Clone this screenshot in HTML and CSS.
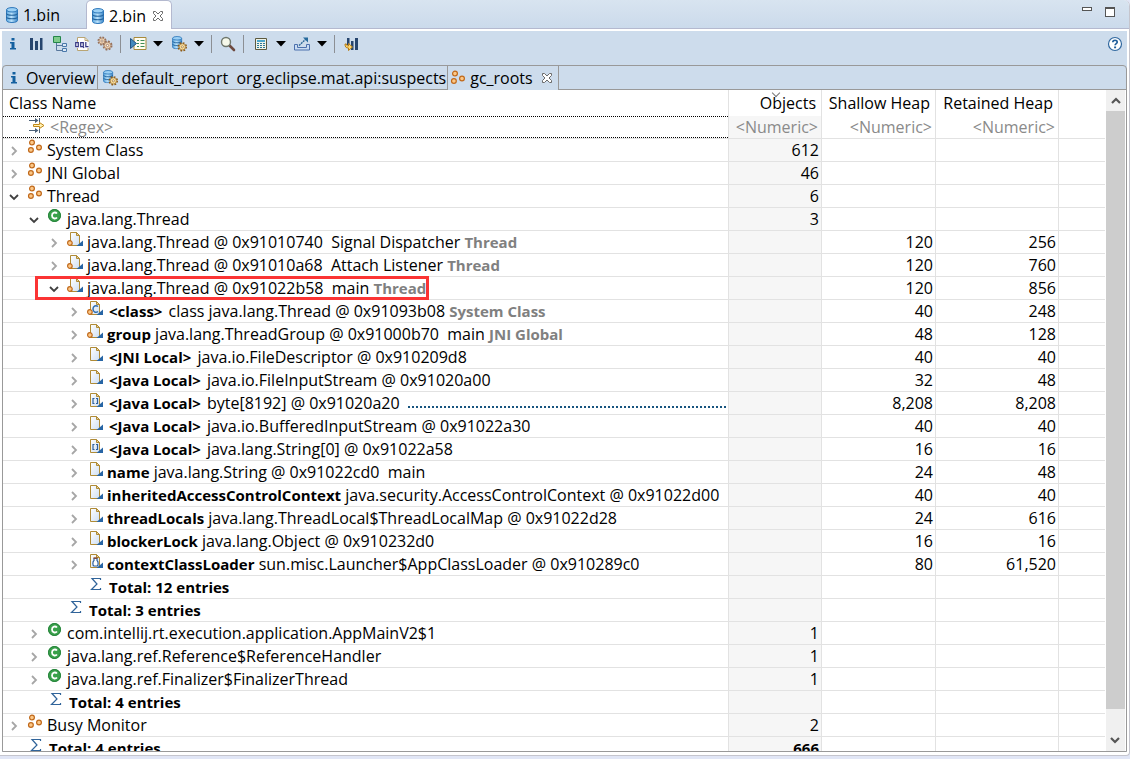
FILE: index.html
```html
<!DOCTYPE html>
<html lang="en">
<head>
<meta charset="utf-8">
<title>Memory Analyzer</title>
<link rel="stylesheet" href="styles.css">
</head>
<body>
<svg class="defs" aria-hidden="true">
  <defs>
    <linearGradient id="page" x1="0" y1="0" x2="1" y2="1"><stop offset="0" stop-color="#ffffff"/><stop offset="1" stop-color="#cfdff2"/></linearGradient>
    <linearGradient id="disk" x1="0" y1="0" x2="1" y2="0"><stop offset="0" stop-color="#5aa6de"/><stop offset=".45" stop-color="#b9e0fa"/><stop offset="1" stop-color="#3a86c8"/></linearGradient>
  </defs>
  <symbol id="i-db" viewBox="0 0 16 16">
    <path d="M2.5 3v10.500c0 1.100 2.200 2 5.500 2s5.500-.9 5.500-2V3z" fill="url(#disk)" stroke="#2f78bb"/>
    <path d="M2.500 6.200c0 1.300 2.200 2 5.500 2s5.500-.7 5.500-2M2.500 9.700c0 1.300 2.200 2 5.500 2s5.500-.7 5.500-2" fill="none" stroke="#24659f" stroke-width="1.100"/>
    <ellipse cx="8" cy="2.800" rx="5.500" ry="2.200" fill="#9bd0f5" stroke="#2b76b9"/>
  </symbol>
  <symbol id="i-gear" viewBox="0 0 16 16">
    <circle cx="8" cy="8" r="6" fill="none" stroke="#8d5a14" stroke-width="2.600" stroke-dasharray="2.700 2.010"/>
    <circle cx="8" cy="8" r="4.800" fill="#fbe2a2" stroke="#a5732c" stroke-width="1.100"/>
    <circle cx="8" cy="8" r="1.700" fill="#fff" stroke="#96631c"/>
  </symbol>
  <symbol id="i-gear2" viewBox="0 0 16 16">
    <circle cx="8" cy="8" r="6" fill="none" stroke="#97705a" stroke-width="2.600" stroke-dasharray="2.700 2.010"/>
    <circle cx="8" cy="8" r="4.800" fill="#efd3b4" stroke="#a37a5c" stroke-width="1.100"/>
    <circle cx="8" cy="8" r="1.700" fill="#fff" stroke="#8f674d"/>
  </symbol>
  <symbol id="i-dbgear" viewBox="0 0 18 17">
    <use href="#i-db" x="0" y="0" width="14" height="14"/>
    <use href="#i-gear" x="7" y="6" width="11" height="11"/>
  </symbol>
  <symbol id="i-info" viewBox="0 0 16 16">
    <path d="M6.500 2h3v2.500h-3zM5 6h4.500v6H11v1.500H5V12h1.500V7.500H5z" fill="#14609f"/>
  </symbol>
  <symbol id="i-bars" viewBox="0 0 16 16">
    <path d="M2 2h3v12H2zM7 5h3v9H7zM12 2h2.500v12H12z" fill="#26456e"/>
  </symbol>
  <symbol id="i-tree" viewBox="0 0 16 16">
    <path d="M5.500 7v7.500H11M5.500 9.500H11" fill="none" stroke="#58779c"/>
    <path d="M2.500 .5h7v6h-7z" fill="#7fcb8b" stroke="#24864a"/>
    <path d="M11.500 7.500h4v3h-4zM11.500 12.500h4v3h-4z" fill="#dbe8f6" stroke="#4a78aa"/>
  </symbol>
  <symbol id="i-oql" viewBox="0 0 16 16">
    <path d="M3.500 1.500h7.500l3 3v10H3.500z" fill="#fff" stroke="#b9a574"/>
    <path d="M11 1.500v3h3" fill="none" stroke="#b9a574"/>
    <path d="M1 6h14v6H1z" fill="#f5f6fb"/>
    <path d="M1.700 6.700h2.600v4H1.700zM6.700 6.700h2.600v4H6.700zM8.500 10l1.500 2M11.800 6v4.700h2.700" fill="none" stroke="#363783" stroke-width="1.200"/>
  </symbol>
  <symbol id="i-gears" viewBox="0 0 16 16">
    <use href="#i-gear2" x="0" y="0" width="10" height="10"/>
    <use href="#i-gear2" x="5" y="4" width="11" height="11"/>
  </symbol>
  <symbol id="i-run" viewBox="0 0 17 16">
    <path d="M4.500 1.500h12v12h-12z" fill="#fffdf0" stroke="#a88a3c"/>
    <path d="M7.500 4.500h2m1.500 0h4M7.500 7.500h2m1.500 0h4M7.500 10.500h2m1.500 0h4" stroke="#3e8c57" stroke-width="1.200"/>
    <path d="M1 2.500v10l6-5z" fill="#4289bd" stroke="#215486"/>
  </symbol>
  <symbol id="i-search" viewBox="0 0 16 16">
    <path d="M9.500 9.500l4.500 4.500" stroke="#6e4a40" stroke-width="2.600" stroke-linecap="round"/>
    <circle cx="6" cy="6" r="4.500" fill="#f6f9ea" stroke="#6f776c" stroke-width="1.400"/>
  </symbol>
  <symbol id="i-calc" viewBox="0 0 16 16">
    <path d="M2.500 2.500h11v11h-11z" fill="#eef3e9" stroke="#5d5a3f"/>
    <path d="M4 4h8v2H4z" fill="#4ba6cb"/>
    <path d="M4 7.500h8M4 9.500h8M4 11.500h8" stroke="#2d7896" stroke-dasharray="2 1"/>
  </symbol>
  <symbol id="i-export" viewBox="0 0 18 16">
    <path d="M1.500 8.500h3v3h9v-3h3v5.500h-15z" fill="#c9dcf2" stroke="#4c70ad"/>
    <path d="M6 9.500l7-6.500" stroke="#2c6798" stroke-width="1.400" stroke-dasharray="2 .7"/>
    <path d="M10 1.500h5v5z" fill="#276a9c"/>
  </symbol>
  <symbol id="i-compare" viewBox="0 0 16 16">
    <path d="M4 2h2.500v7H4zM8 5h2.500v9H8zM12 2h3v12h-3z" fill="#26456e"/>
    <path d="M2 8c0 3 1 4 3.500 4v2.500L9.500 11 5.500 7.500V10C4 10 3.500 9.500 3.500 8z" fill="#ffd972" stroke="#b67d16"/>
  </symbol>
  <symbol id="i-help" viewBox="0 0 16 16">
    <circle cx="8" cy="8" r="6.500" fill="#fff" stroke="#31689f" stroke-width="1.200"/>
    <path d="M5.800 6.300C5.800 3.500 10.300 3.700 10.200 6.200 10.100 7.500 8.100 7.700 8.100 9.300" fill="none" stroke="#1f5d99" stroke-width="1.700"/>
    <path d="M7.100 10.500h2v1.700h-2z" fill="#1f5d99"/>
  </symbol>
  <symbol id="i-close" viewBox="0 0 12 12">
    <path d="M1.500 1.500h2L6 4l2.500-2.500h2v2L8 6l2.500 2.500v2h-2L6 8l-2.500 2.500h-2v-2L4 6 1.500 3.500z" fill="#fff" stroke="#6b6b6b"/>
  </symbol>
  <symbol id="i-roots" viewBox="0 0 16 16">
    <g fill="#fcc888" stroke="#c0691b" stroke-width="1.200"><circle cx="5" cy="3.500" r="2.400"/><circle cx="3.900" cy="11" r="2.400"/><circle cx="12" cy="8.500" r="2.400"/></g>
  </symbol>
  <symbol id="i-regex" viewBox="0 0 16 16">
    <path d="M0 3.500h8M0 13.500h8M10.500 1v4.500M10.500 11.500V16" fill="none" stroke="#4b6078"/>
    <path d="M6 1l3.500 2.500L6 6zM6 11l3.500 2.500L6 16z" fill="#4b6078"/>
    <path d="M4.500 7.500h6v-2L15 8.500l-4.500 3v-2h-6z" fill="#fff0b4" stroke="#c08716"/>
  </symbol>
  <symbol id="i-class" viewBox="0 0 16 16">
    <circle cx="7.500" cy="7.500" r="6.500" fill="#39a04a"/><circle cx="7.500" cy="7.500" r="6" fill="none" stroke="#24813a"/>
    <path d="M10 5.500C8.500 3.800 5 4.200 5 7.500s3.500 3.700 5 2" fill="none" stroke="#fff" stroke-width="1.800"/>
  </symbol>
  <symbol id="i-obj" viewBox="0 0 16 16">
    <path d="M3.500 1.500h6l3 3v10h-9z" fill="url(#page)" stroke="#b08b36"/>
    <path d="M9.500 1.500v3h3z" fill="#e9d49a" stroke="#b08b36"/>
    <path d="M16 9.500V15H9.500z" fill="#2765a5"/>
  </symbol>
  <symbol id="i-objroot" viewBox="0 0 16 16">
    <use href="#i-obj" width="16" height="16"/>
    <circle cx="2.900" cy="12" r="2.300" fill="#fcc888" stroke="#c0691b" stroke-width="1.200"/>
  </symbol>
  <symbol id="i-objclass" viewBox="0 0 16 16">
    <use href="#i-objroot" width="16" height="16"/>
    <path d="M11 6.500C9 5 6 5.800 6 9s3 4.200 5 2.500" fill="none" stroke="#2f6db0" stroke-width="1.500"/>
  </symbol>
  <symbol id="i-array" viewBox="0 0 16 16">
    <use href="#i-obj" width="16" height="16"/>
    <path d="M7.500 6.500H6v5h1.500M9 6.500h1.500v5H9" fill="none" stroke="#2b5f9e" stroke-width="1.200"/>
  </symbol>
  <symbol id="i-loader" viewBox="0 0 16 16">
    <use href="#i-obj" width="16" height="16"/>
    <path d="M7 5.500h3v2c1.500 1 1.500 5 0 5.500H7c-1.500-.5-1.500-4.500 0-5.500z" fill="#fff" stroke="#2b5f9e" stroke-width="1.200"/>
    <path d="M6.500 5h4" stroke="#994a22" stroke-width="1.400"/>
  </symbol>
  <symbol id="i-sum" viewBox="0 0 16 16">
    <path d="M13.500 4V2.500H5L10 8l-5.500 5.500h9V12" fill="none" stroke="#30649a" stroke-width="1.200"/>
  </symbol>
  <symbol id="i-right" viewBox="0 0 14 14"><path d="M5 4l4 4-4 4" fill="none" stroke="#a6a6a6" stroke-width="1.800"/></symbol>
  <symbol id="i-down" viewBox="0 0 14 14"><path d="M3 6l4 4 4-4" fill="none" stroke="#404040" stroke-width="1.800"/></symbol>
  <symbol id="i-up" viewBox="0 0 14 14"><path d="M3 9l4-4 4 4" fill="none" stroke="#555" stroke-width="2.200"/></symbol>
  <symbol id="i-menu" viewBox="0 0 10 6"><path d="M0 0h10L5 5.500z" fill="#000"/></symbol>
</svg>

<main class="editor">
  <header class="filetabs">
    <button class="filetab"><svg class="icon"><use href="#i-db"/></svg>1.bin</button>
    <button class="filetab active"><svg class="icon"><use href="#i-db"/></svg>2.bin<svg class="close"><use href="#i-close"/></svg></button>
    <div class="window">
      <button class="min" aria-label="Minimize"></button>
      <button class="max" aria-label="Maximize"></button>
    </div>
  </header>

  <section class="pane">
    <div class="toolbar">
      <button aria-label="Overview"><svg class="icon"><use href="#i-info"/></svg></button>
      <button aria-label="Histogram"><svg class="icon"><use href="#i-bars"/></svg></button>
      <button aria-label="Dominator tree"><svg class="icon"><use href="#i-tree"/></svg></button>
      <button aria-label="Query language"><svg class="icon"><use href="#i-oql"/></svg></button>
      <button aria-label="Thread overview"><svg class="icon"><use href="#i-gears"/></svg></button>
      <span class="sep"></span>
      <button class="drop" aria-label="Run report"><svg class="icon wide"><use href="#i-run"/></svg><svg class="menu"><use href="#i-menu"/></svg></button>
      <button class="drop" aria-label="Query browser"><svg class="icon wide"><use href="#i-dbgear"/></svg><svg class="menu"><use href="#i-menu"/></svg></button>
      <span class="sep"></span>
      <button aria-label="Find"><svg class="icon"><use href="#i-search"/></svg></button>
      <span class="sep"></span>
      <button class="drop" aria-label="Calculate retained size"><svg class="icon wide"><use href="#i-calc"/></svg><svg class="menu"><use href="#i-menu"/></svg></button>
      <button class="drop" aria-label="Export"><svg class="icon wide"><use href="#i-export"/></svg><svg class="menu"><use href="#i-menu"/></svg></button>
      <span class="sep"></span>
      <button aria-label="Compare"><svg class="icon"><use href="#i-compare"/></svg></button>
      <button class="help" aria-label="Help"><svg class="icon"><use href="#i-help"/></svg></button>
    </div>

    <div class="view">
      <nav class="viewtabs">
        <button class="viewtab"><svg class="icon"><use href="#i-info"/></svg>Overview</button>
        <button class="viewtab report"><svg class="icon wide"><use href="#i-dbgear"/></svg>default_report&nbsp; org.eclipse.mat.api:suspects</button>
        <button class="viewtab active"><svg class="icon"><use href="#i-roots"/></svg>gc_roots<svg class="close"><use href="#i-close"/></svg></button>
      </nav>

      <div class="content">
        <div class="scroller">
          <table>
            <colgroup><col><col class="c-objects"><col class="c-shallow"><col class="c-retained"><col class="c-rest"></colgroup>
            <thead>
              <tr><th>Class Name</th><th class="sorted">Objects</th><th>Shallow Heap</th><th>Retained Heap</th><th></th></tr>
            </thead>
            <tbody>
              <tr class="filter">
                <td><label class="node"><i class="twisty"></i><svg class="icon"><use href="#i-regex"/></svg><input aria-label="Class name filter" placeholder="&lt;Regex&gt;"></label></td>
                <td><input aria-label="Objects filter" placeholder="&lt;Numeric&gt;"></td>
                <td><input aria-label="Shallow heap filter" placeholder="&lt;Numeric&gt;"></td>
                <td><input aria-label="Retained heap filter" placeholder="&lt;Numeric&gt;"></td><td></td>
              </tr>
              <tr><td><div class="node"><svg class="twisty"><use href="#i-right"/></svg><svg class="icon"><use href="#i-roots"/></svg><span>System Class</span></div></td><td>612</td><td></td><td></td><td></td></tr>
              <tr><td><div class="node"><svg class="twisty"><use href="#i-right"/></svg><svg class="icon"><use href="#i-roots"/></svg><span>JNI Global</span></div></td><td>46</td><td></td><td></td><td></td></tr>
              <tr><td><div class="node"><svg class="twisty"><use href="#i-down"/></svg><svg class="icon"><use href="#i-roots"/></svg><span>Thread</span></div></td><td>6</td><td></td><td></td><td></td></tr>
              <tr><td><div class="node l1"><svg class="twisty"><use href="#i-down"/></svg><svg class="icon"><use href="#i-class"/></svg><span>java.lang.Thread</span></div></td><td>3</td><td></td><td></td><td></td></tr>
              <tr><td><div class="node l2"><svg class="twisty"><use href="#i-right"/></svg><svg class="icon"><use href="#i-objroot"/></svg><span>java.lang.Thread @ 0x91010740&nbsp; Signal Dispatcher <b class="root">Thread</b></span></div></td><td></td><td>120</td><td>256</td><td></td></tr>
              <tr><td><div class="node l2"><svg class="twisty"><use href="#i-right"/></svg><svg class="icon"><use href="#i-objroot"/></svg><span>java.lang.Thread @ 0x91010a68&nbsp; Attach Listener <b class="root">Thread</b></span></div></td><td></td><td>120</td><td>760</td><td></td></tr>
              <tr><td><div class="node l2 marked"><svg class="twisty"><use href="#i-down"/></svg><svg class="icon"><use href="#i-objroot"/></svg><span>java.lang.Thread @ 0x91022b58&nbsp; main <b class="root">Thread</b></span></div></td><td></td><td>120</td><td>856</td><td></td></tr>
              <tr><td><div class="node l3"><svg class="twisty"><use href="#i-right"/></svg><svg class="icon"><use href="#i-objclass"/></svg><span><b class="ref">&lt;class&gt;</b> class java.lang.Thread @ 0x91093b08 <b class="root">System Class</b></span></div></td><td></td><td>40</td><td>248</td><td></td></tr>
              <tr><td><div class="node l3"><svg class="twisty"><use href="#i-right"/></svg><svg class="icon"><use href="#i-objroot"/></svg><span><b>group</b> java.lang.ThreadGroup @ 0x91000b70&nbsp; main <b class="root">JNI Global</b></span></div></td><td></td><td>48</td><td>128</td><td></td></tr>
              <tr><td><div class="node l3"><svg class="twisty"><use href="#i-right"/></svg><svg class="icon"><use href="#i-obj"/></svg><span><b class="ref">&lt;JNI Local&gt;</b> java.io.FileDescriptor @ 0x910209d8</span></div></td><td></td><td>40</td><td>40</td><td></td></tr>
              <tr><td><div class="node l3"><svg class="twisty"><use href="#i-right"/></svg><svg class="icon"><use href="#i-obj"/></svg><span><b class="ref">&lt;Java Local&gt;</b> java.io.FileInputStream @ 0x91020a00</span></div></td><td></td><td>32</td><td>48</td><td></td></tr>
              <tr><td><div class="node l3"><svg class="twisty"><use href="#i-right"/></svg><svg class="icon"><use href="#i-array"/></svg><span><b class="ref">&lt;Java Local&gt;</b> byte[8192] @ 0x91020a20</span><i class="dots"></i></div></td><td></td><td>8,208</td><td>8,208</td><td></td></tr>
              <tr><td><div class="node l3"><svg class="twisty"><use href="#i-right"/></svg><svg class="icon"><use href="#i-obj"/></svg><span><b class="ref">&lt;Java Local&gt;</b> java.io.BufferedInputStream @ 0x91022a30</span></div></td><td></td><td>40</td><td>40</td><td></td></tr>
              <tr><td><div class="node l3"><svg class="twisty"><use href="#i-right"/></svg><svg class="icon"><use href="#i-array"/></svg><span><b class="ref">&lt;Java Local&gt;</b> java.lang.String[0] @ 0x91022a58</span></div></td><td></td><td>16</td><td>16</td><td></td></tr>
              <tr><td><div class="node l3"><svg class="twisty"><use href="#i-right"/></svg><svg class="icon"><use href="#i-obj"/></svg><span><b>name</b> java.lang.String @ 0x91022cd0&nbsp; main</span></div></td><td></td><td>24</td><td>48</td><td></td></tr>
              <tr><td><div class="node l3"><svg class="twisty"><use href="#i-right"/></svg><svg class="icon"><use href="#i-obj"/></svg><span><b>inheritedAccessControlContext</b> java.security.AccessControlContext @ 0x91022d00</span></div></td><td></td><td>40</td><td>40</td><td></td></tr>
              <tr><td><div class="node l3"><svg class="twisty"><use href="#i-right"/></svg><svg class="icon"><use href="#i-obj"/></svg><span><b>threadLocals</b> java.lang.ThreadLocal$ThreadLocalMap @ 0x91022d28</span></div></td><td></td><td>24</td><td>616</td><td></td></tr>
              <tr><td><div class="node l3"><svg class="twisty"><use href="#i-right"/></svg><svg class="icon"><use href="#i-obj"/></svg><span><b>blockerLock</b> java.lang.Object @ 0x910232d0</span></div></td><td></td><td>16</td><td>16</td><td></td></tr>
              <tr><td><div class="node l3"><svg class="twisty"><use href="#i-right"/></svg><svg class="icon"><use href="#i-loader"/></svg><span><b>contextClassLoader</b> sun.misc.Launcher$AppClassLoader @ 0x910289c0</span></div></td><td></td><td>80</td><td>61,520</td><td></td></tr>
              <tr class="total"><td><div class="node l3"><i class="twisty"></i><svg class="icon"><use href="#i-sum"/></svg><span>Total: 12 entries</span></div></td><td></td><td></td><td></td><td></td></tr>
              <tr class="total"><td><div class="node l2"><i class="twisty"></i><svg class="icon"><use href="#i-sum"/></svg><span>Total: 3 entries</span></div></td><td></td><td></td><td></td><td></td></tr>
              <tr><td><div class="node l1"><svg class="twisty"><use href="#i-right"/></svg><svg class="icon"><use href="#i-class"/></svg><span>com.intellij.rt.execution.application.AppMainV2$1</span></div></td><td>1</td><td></td><td></td><td></td></tr>
              <tr><td><div class="node l1"><svg class="twisty"><use href="#i-right"/></svg><svg class="icon"><use href="#i-class"/></svg><span>java.lang.ref.Reference$ReferenceHandler</span></div></td><td>1</td><td></td><td></td><td></td></tr>
              <tr><td><div class="node l1"><svg class="twisty"><use href="#i-right"/></svg><svg class="icon"><use href="#i-class"/></svg><span>java.lang.ref.Finalizer$FinalizerThread</span></div></td><td>1</td><td></td><td></td><td></td></tr>
              <tr class="total"><td><div class="node l1"><i class="twisty"></i><svg class="icon"><use href="#i-sum"/></svg><span>Total: 4 entries</span></div></td><td></td><td></td><td></td><td></td></tr>
              <tr><td><div class="node"><svg class="twisty"><use href="#i-right"/></svg><svg class="icon"><use href="#i-roots"/></svg><span>Busy Monitor</span></div></td><td>2</td><td></td><td></td><td></td></tr>
              <tr class="total"><td><div class="node"><i class="twisty"></i><svg class="icon"><use href="#i-sum"/></svg><span>Total: 4 entries</span></div></td><td>666</td><td></td><td></td><td></td></tr>
            </tbody>
          </table>
        </div>
        <div class="scrollbar">
          <button aria-label="Scroll up"><svg class="twisty"><use href="#i-up"/></svg></button>
          <div class="track"><div class="thumb"></div></div>
          <button class="flip" aria-label="Scroll down"><svg class="twisty"><use href="#i-up"/></svg></button>
        </div>
      </div>
    </div>
  </section>
</main>
</body>
</html>
```
FILE: styles.css
```css
* { box-sizing: border-box; }

body {
  margin: 0;
  height: 100vh;
  padding-bottom: 3px;
  background: #e1e6f6;
  color: #000;
  font: 16px/22px "Open Sans", "Noto Sans", sans-serif;
  overflow: hidden;
}

button, input {
  margin: 0;
  padding: 0;
  border: 0;
  background: none;
  color: inherit;
  font: inherit;
}

.defs { position: absolute; width: 0; height: 0; }

.icon { width: 16px; height: 16px; flex: none; }
.icon.wide { width: 18px; }
.close { width: 12px; height: 12px; flex: none; }
.twisty { width: 14px; height: 14px; flex: none; }

.editor {
  height: 100%;
  display: flex;
  flex-direction: column;
  border-right: 1px solid #c5c5cd;
  border-bottom: 1px solid #c5c5cd;
  border-radius: 0 6px 4px 0;
  background: #fff;
  overflow: hidden;
}

/* File tabs */
.filetabs {
  height: 29px;
  flex: none;
  display: flex;
  border-bottom: 1px solid #b4b9cf;
  background: linear-gradient(#d8e4f0, #cbdaeb);
}

.filetab {
  display: flex;
  align-items: center;
  gap: 3px;
  height: 29px;
  padding: 1px 26px 0 4px;
}

.filetab.active {
  padding: 1px 7px 0 3px;
  border: 1px solid #b4b9cf;
  border-bottom: 0;
  border-radius: 5px 5px 0 0;
  background: #fff;
}

.filetab .close { margin-left: 3px; }

.window {
  display: flex;
  gap: 13px;
  margin-left: auto;
  padding: 7px 14px 0 0;
}

.min, .max { width: 10px; border: 1px solid #555; background: #fff; }
.min { height: 4px; }
.max { height: 10px; border-top-width: 2px; }

/* Toolbar */
.pane {
  flex: 1;
  min-height: 0;
  display: flex;
  flex-direction: column;
  margin: 2px 2px 3px;
  background: #cddcec;
}

.toolbar {
  height: 34px;
  flex: none;
  display: flex;
  align-items: center;
  gap: 7px;
  padding: 0 4px 8px 3px;
}

.toolbar button { display: flex; align-items: center; }
.toolbar .drop { gap: 6px; }
.menu { width: 10px; height: 6px; }
.sep { width: 1px; height: 18px; margin-right: 1px; background: #8c8f94; }
.help { margin-left: auto; }

/* Report tabs */
.view {
  flex: 1;
  min-height: 0;
  display: flex;
  flex-direction: column;
  border: 1px solid #999;
  border-radius: 4px 4px 0 0;
}

.viewtabs {
  height: 24px;
  flex: none;
  display: flex;
  border-bottom: 1px solid #999;
}

.viewtab {
  display: flex;
  align-items: center;
  gap: 4px;
  padding: 0 2px 0 3px;
  border-right: 1px solid #999;
}

.viewtab.report { gap: 2px; padding: 0 1px 0 3px; }
.viewtab.active { height: 24px; padding: 0 5px 1px 2px; background: #cddcec; }
.viewtab .close { margin-left: 4px; }

/* Tree table */
.content {
  flex: 1;
  min-height: 0;
  display: flex;
  background: #fff;
}

.scroller { flex: 1; min-width: 0; overflow: hidden; }

table {
  width: 100%;
  table-layout: fixed;
  border-collapse: separate;
  border-spacing: 0;
}

.c-objects { width: 93px; }
.c-shallow { width: 114px; }
.c-retained { width: 123px; }
.c-rest { width: 46px; }

th {
  height: 26px;
  padding: 0 5px 0 6px;
  border-right: 1px solid #e2e2e2;
  font-weight: 400;
  text-align: right;
  white-space: nowrap;
}

th:first-child { text-align: left; }
.sorted { position: relative; }

.sorted::before {
  content: "";
  position: absolute;
  top: 0;
  left: 44px;
  width: 5px;
  height: 5px;
  border: solid #777;
  border-width: 0 1px 1px 0;
  transform: rotate(45deg);
}

td {
  height: 23px;
  padding: 0 2px 0 0;
  border-right: 1px solid #e2e2e2;
  border-bottom: 1px solid #e2e2e2;
  text-align: right;
  white-space: nowrap;
}

td:first-child { padding: 0; text-align: left; }
td:nth-child(2) { background: #f6f6f6; }
th:last-child, td:last-child { border-right: 0; }

.node {
  display: flex;
  align-items: center;
  height: 22px;
  padding-left: 4px;
}

.l1 { padding-left: 24px; }
.l2 { padding-left: 44px; }
.l3 { padding-left: 64px; }
.node .icon { align-self: flex-start; margin: 0 4px 0 6px; }

b, .total {
  font-size: 15px;
  font-weight: 700;
}

.total span { padding-left: 2px; }
.ref { margin: 0 2px; }
.root { color: #808080; }

.marked { position: relative; width: fit-content; }

.marked::after {
  content: "";
  position: absolute;
  inset: -1px -3px -1px 32px;
  border: 3px solid #fb3434;
}

.dots {
  flex: 1;
  height: 2px;
  margin: 8px 0 0 8px;
  background: repeating-linear-gradient(90deg, #17547f 0 2px, transparent 2px 4px);
}

.filter td { padding-right: 3px; }
.filter td:first-child { padding: 0; vertical-align: top; }
.filter input { width: 100%; height: 22px; text-align: inherit; }
.filter input::placeholder { color: #8a8a8a; opacity: 1; }
.filter .node { border: 1px dotted #000; border-width: 1px 0; }
.filter .node .icon { margin: 0 5px 0 8px; }
.filter .node input { height: 20px; }

/* Scrollbar */
.scrollbar {
  width: 20px;
  flex: none;
  display: flex;
  flex-direction: column;
  margin-left: 1px;
  border-right: 1px solid #fff;
  background: #f0f0f0;
}

.scrollbar button {
  display: flex;
  align-items: center;
  justify-content: center;
  height: 21px;
}

.flip { transform: rotate(180deg); }
.track { flex: 1; }
.thumb { height: 96.6%; background: #cdcdcd; }
```
